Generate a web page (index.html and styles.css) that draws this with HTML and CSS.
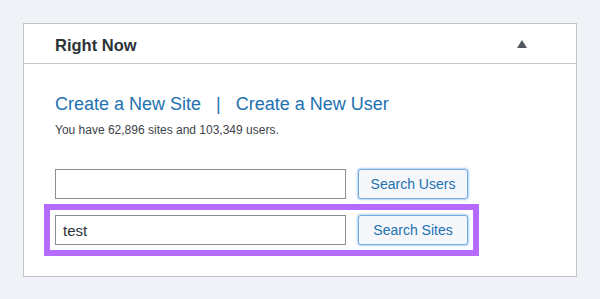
FILE: index.html
```html
<!DOCTYPE html>
<html>
<head>
  <link rel="stylesheet" href="styles.css">
</head>
<body>
  <div class="postbox">
    <div class="postbox-header">
      <h2 class="postbox-title">Right Now</h2>
      <span class="toggle-arrow"></span>
    </div>
    <div class="inside">
      <p class="sub-links">
        <a href="#">Create a New Site</a>
        <span class="sep">|</span>
        <a href="#">Create a New User</a>
      </p>
      <p class="counts">You have 62,896 sites and 103,349 users.</p>

      <form class="search-row">
        <input type="search" class="search-input">
        <button type="button" class="button">Search Users</button>
      </form>
      <div class="highlight">
        <form class="search-row">
          <input type="search" class="search-input" value="test">
          <button type="button" class="button">Search Sites</button>
        </form>
      </div>
    </div>
  </div>
</body>
</html>
```

FILE: styles.css
```css
* {
  margin: 0;
  padding: 0;
  box-sizing: border-box;
}

body {
  background: #f1f2f7;
  font-family: "Liberation Sans", Arial, sans-serif;
  padding: 23px 23px 0 23px;
}

.postbox {
  width: 554px;
  background: #fff;
  border: 1px solid #c3c4c7;
}

.postbox-header {
  display: flex;
  justify-content: space-between;
  align-items: center;
  height: 40px;
  padding: 3px 49px 0 31px;
  border-bottom: 1px solid #c3c4c7;
}

.postbox-title {
  font-size: 16.5px;
  font-weight: 600;
  color: #2c3338;
}

.toggle-arrow {
  width: 0;
  height: 0;
  border-left: 5.5px solid transparent;
  border-right: 5.5px solid transparent;
  border-bottom: 8px solid #50575e;
  margin-top: -3px;
}

.inside {
  padding: 30px 31px 20px 31px;
  display: flex;
  flex-direction: column;
  align-items: flex-start;
}

.sub-links {
  font-size: 18px;
  line-height: 21px;
}

.sub-links a {
  color: #2271b1;
  text-decoration: none;
}

.sep {
  color: #2271b1;
  margin: 0 10px;
}

.counts {
  font-size: 12px;
  line-height: 15px;
  color: #3c434a;
  margin-top: 8px;
  margin-bottom: 31px;
}

.search-row {
  display: flex;
  gap: 12px;
}

.search-input {
  width: 291px;
  height: 30px;
  border: 1px solid #8c8f94;
  border-radius: 0;
  padding: 0 7px;
  font-family: inherit;
  font-size: 15px;
  color: #2c3338;
  outline: none;
}

.button {
  width: 110px;
  height: 30px;
  border: 1px solid #72aee6;
  border-radius: 3px;
  background: #f5f7fa;
  box-shadow: 0 0 2px 1px rgba(114, 174, 230, 0.55);
  color: #2271b1;
  font-family: inherit;
  font-size: 14px;
}

.highlight {
  border: 6px solid #b56bff;
  padding: 5px;
  margin: 5px 0 0 -11px;
}
```
